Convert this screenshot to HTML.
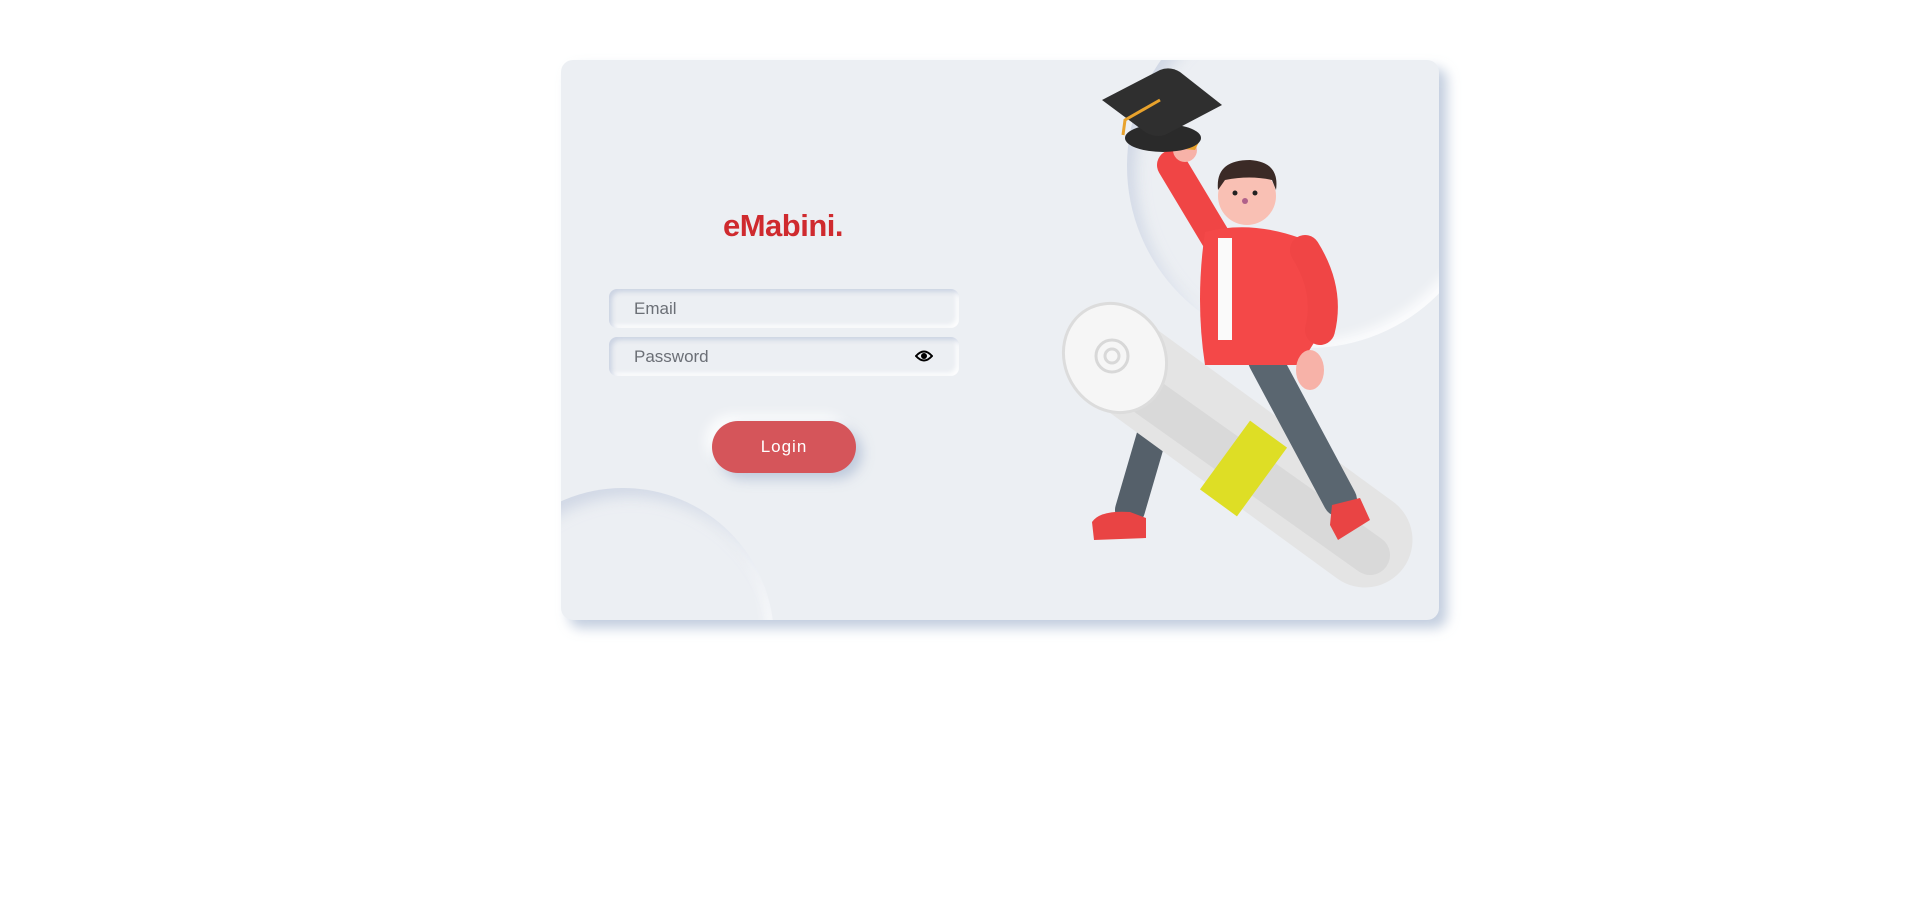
<!DOCTYPE html>
<html><head><meta charset="utf-8"><style>
html,body{margin:0;padding:0;background:#fff;width:1920px;height:919px;overflow:hidden;font-family:"Liberation Sans",sans-serif}
.card{position:absolute;left:561px;top:60px;width:878px;height:560px;background:#eceff3;border-radius:12px;box-shadow:8px 8px 12px rgba(170,185,210,.7),-6px -6px 14px rgba(255,255,255,.9);overflow:hidden}
.c1{position:absolute;left:-89px;top:428px;width:302px;height:302px;border-radius:50%;box-shadow:inset 8px 8px 14px rgba(190,200,220,.6),inset -6px -6px 12px rgba(255,255,255,.9)}
.c2{position:absolute;left:566px;top:-76px;width:364px;height:364px;border-radius:50%;box-shadow:inset 8px 8px 14px rgba(190,200,220,.6),inset -6px -6px 12px rgba(255,255,255,.9)}
.logo{position:absolute;left:0;width:444px;top:148px;text-align:center;font-weight:bold;font-size:31px;color:#cf2a2e;letter-spacing:-.5px}
.inp{position:absolute;left:48px;width:350px;height:39px;border-radius:8px;background:#eceff3;box-shadow:inset 3px 3px 5px rgba(190,200,220,.7),inset -3px -3px 5px rgba(255,255,255,.9)}
.inp span{position:absolute;left:25px;top:10px;font-size:17px;color:#6b6f76}
.btn{position:absolute;left:151px;top:361px;width:144px;height:52px;border-radius:26px;background:#d5555a;color:#fff;font-size:17px;letter-spacing:1px;text-align:center;line-height:52px;box-shadow:6px 6px 12px rgba(170,185,210,.7),-6px -6px 12px rgba(255,255,255,.9)}
</style></head><body>
<div class="card">
<div class="c1"></div><div class="c2"></div>
<div class="logo">eMabini.</div>
<div class="inp" style="top:229px"><span>Email</span></div>
<div class="inp" style="top:277px"><span>Password</span>
<svg style="position:absolute;left:306px;top:12px" width="18" height="14" viewBox="0 0 18 14"><path d="M1 7 Q9 -2 17 7 Q9 16 1 7Z" fill="none" stroke="#000" stroke-width="2"/><circle cx="9" cy="7" r="3" fill="#000"/></svg></div>
<div class="btn">Login</div>
</div>
<svg style="position:absolute;left:0;top:0" width="1920" height="919">
<!-- left leg -->
<path d="M1165 390 L1130 510" stroke="#55606a" stroke-width="30" stroke-linecap="round"/>
<path d="M1092 522 Q1100 510 1130 512 L1146 518 L1146 538 L1094 540Z" fill="#e94444"/>
<!-- scroll -->
<path d="M1125 365 L1365 540" stroke="#e4e4e4" stroke-width="95" stroke-linecap="round"/>
<path d="M1145 395 L1370 555" stroke="#cccccc" stroke-width="40" stroke-linecap="round" opacity=".45"/>
<path d="M1225 455 L1262 482" stroke="#dede25" stroke-width="85"/>
<ellipse cx="1115" cy="358" rx="50" ry="56" fill="#f6f6f6" stroke="#dcdcdc" stroke-width="3" transform="rotate(-30 1115 358)"/>
<circle cx="1112" cy="356" r="16" fill="none" stroke="#d8d8d8" stroke-width="3"/>
<circle cx="1112" cy="356" r="7" fill="none" stroke="#d8d8d8" stroke-width="3"/>
<!-- right leg -->
<path d="M1265 360 L1340 500" stroke="#5a6670" stroke-width="34" stroke-linecap="round"/>
<path d="M1332 505 L1360 498 L1370 520 L1338 540 L1330 525Z" fill="#e94444"/>
<!-- raised arm -->
<path d="M1172 165 L1220 245" stroke="#f04545" stroke-width="30" stroke-linecap="round"/>
<!-- torso -->
<path d="M1205 232 Q1250 220 1300 238 L1322 330 L1300 365 L1205 365 Q1195 300 1205 232Z" fill="#f44848"/>
<path d="M1218 238 L1232 238 L1232 340 L1218 340Z" fill="#fafafa"/>
<!-- right arm -->
<path d="M1305 250 Q1330 290 1320 330" stroke="#f04545" stroke-width="30" stroke-linecap="round" fill="none"/>
<ellipse cx="1310" cy="370" rx="14" ry="20" fill="#f7b2a8"/>
<!-- head -->
<circle cx="1247" cy="196" r="29" fill="#f9c0b4"/>
<path d="M1218 190 Q1215 160 1250 160 Q1280 162 1276 190 L1272 180 Q1250 175 1225 180Z" fill="#3b2a26"/>
<circle cx="1235" cy="193" r="2.5" fill="#222"/><circle cx="1255" cy="193" r="2.5" fill="#222"/>
<circle cx="1245" cy="201" r="3" fill="#b0618a"/>
<!-- hand and hat -->
<circle cx="1185" cy="150" r="12" fill="#f7b2a8"/>
<path d="M1126 140 L1140 145 L1195 150 L1200 140 Z" fill="#e8a22c"/>
<ellipse cx="1163" cy="138" rx="38" ry="14" fill="#2a2a2a"/>
<path d="M1102 100 L1160 70 Q1170 66 1180 72 L1222 105 L1165 135 Q1155 138 1145 132Z" fill="#2f2f2f"/>
<path d="M1160 100 L1125 120 L1123 135" stroke="#e8a22c" stroke-width="3" fill="none"/>
</svg>
</body></html>
